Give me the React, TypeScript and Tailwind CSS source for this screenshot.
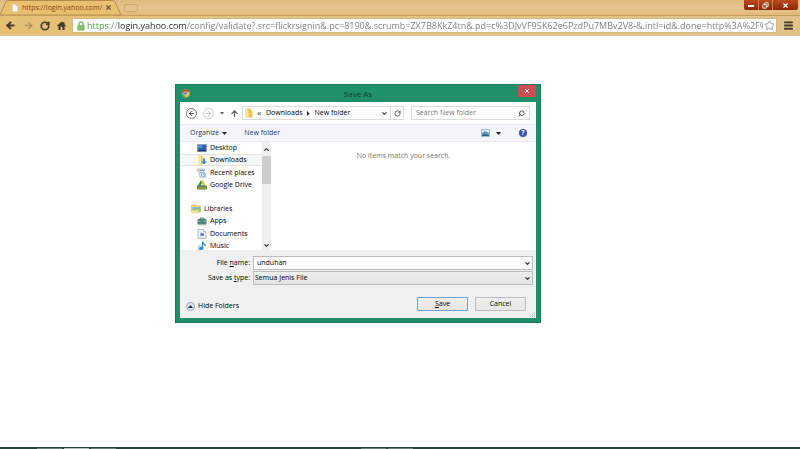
import React, { useState } from 'react';
import { ArrowLeft, ArrowRight, ArrowUp, ChevronDown, ChevronUp, Menu, RotateCw, Search, Star, X } from 'lucide-react';

const PAGE_URL =
  'https://login.yahoo.com/config/validate?.src=flickrsignin&.pc=8190&.scrumb=ZX7B8KkZ4tn&.pd=c%3DJvVF95K62e6PzdPu7MBv2V8-&.intl=id&.done=http%3A%2F%2Fwww.flickr.com';

function DesktopIcon() {
  return (
    <svg viewBox="0 0 10 10" className="h-[10px] w-[10px] shrink-0">
      <rect x="0.5" y="1.5" width="9" height="7" fill="#2f62b8" stroke="#8d99ad" strokeWidth="0.8" />
      <rect x="1" y="2" width="4" height="3" fill="#5b8fdd" />
      <rect x="1" y="7.2" width="8" height="1" fill="#1c2f5e" />
    </svg>
  );
}

function DownloadsIcon() {
  return (
    <svg viewBox="0 0 10 10" className="h-[10px] w-[10px] shrink-0">
      <path d="M1 0.5h4l1 1v8H1z" fill="#f1cf68" />
      <path d="M1 0.5l3 1.2v8L1 9z" fill="#fbe69b" />
      <path d="M6 3.5h2v3h1.8L7 9.6 4.2 6.5H6z" fill="#2f8fd6" />
    </svg>
  );
}

function RecentIcon() {
  return (
    <svg viewBox="0 0 10 10" className="h-[10px] w-[10px] shrink-0">
      <path d="M0.5 1h7v2H6.5l2.5 6.2H3L1.5 3H.5z" fill="#dfe8f0" stroke="#8fa3b5" strokeWidth="0.6" />
      <path d="M2.5 2.5h4M3 4.2h1.5" stroke="#5f86a8" strokeWidth="0.7" />
      <circle cx="6.3" cy="6.4" r="2" fill="#f5f9fc" stroke="#6f93b3" strokeWidth="0.7" />
      <path d="M6.3 5.2v1.3h1" stroke="#44627d" strokeWidth="0.5" fill="none" />
    </svg>
  );
}

function DriveIcon() {
  return (
    <svg viewBox="0 0 10 10" className="h-[10px] w-[10px] shrink-0">
      <path d="M0 5.5h10v3.2L9 9.5H1L0 8.7z" fill="#5f6f2c" />
      <path d="M3.5 0.5h2.6L9 6H6.4z" fill="#e5c63e" />
      <path d="M3.5 0.5L5 3.2 2.8 7 1 6z" fill="#3f8f43" />
      <path d="M4 5.2h4L7.2 6.5H3.2z" fill="#6c8f9f" />
      <path d="M1 8h8" stroke="#d8dd8a" strokeWidth="0.8" />
    </svg>
  );
}

function LibrariesIcon() {
  return (
    <svg viewBox="0 0 10 10" className="h-[10px] w-[10px] shrink-0">
      <path d="M0.5 1h3.6l.8 1H9.5v5.5H.5z" fill="#f3d677" stroke="#c9a74a" strokeWidth="0.5" />
      <path d="M1.6 3h7.6v3H1.6z" fill="#7fc0dc" />
      <path d="M2.2 4.6h7.4v3.9H2.2z" fill="#8fc56e" />
      <path d="M0.5 6.5c3 .3 5-.2 7-1v4H1z" fill="#f2df9c" />
    </svg>
  );
}

function AppsIcon() {
  return (
    <svg viewBox="0 0 10 10" className="h-[10px] w-[10px] shrink-0">
      <path d="M3.2 3.5V2h3.6v1.5" fill="none" stroke="#5c7568" strokeWidth="1" />
      <rect x="0.5" y="3" width="9" height="5.4" rx="1.2" fill="#4b8772" />
      <path d="M1 5.2h8" stroke="#b3d0be" strokeWidth="0.6" />
      <rect x="4" y="4.4" width="2" height="1.8" fill="#4a6ba0" />
      <path d="M1.5 8.9h7" stroke="#8da096" strokeWidth="0.6" />
    </svg>
  );
}

function DocumentsIcon() {
  return (
    <svg viewBox="0 0 10 10" className="h-[10px] w-[10px] shrink-0">
      <path d="M1 0.6h5.5L9 3v6.5H1z" fill="#fbfcfd" stroke="#8b98a8" strokeWidth="0.7" />
      <path d="M6.5 0.6V3H9" fill="#dfe5ee" stroke="#8b98a8" strokeWidth="0.5" />
      <path d="M2.3 3h3M2.3 8h4" stroke="#a4b0bd" strokeWidth="0.6" />
      <rect x="3.4" y="4.3" width="3.4" height="2.4" fill="#456ca6" />
    </svg>
  );
}

function MusicIcon() {
  return (
    <svg viewBox="0 0 10 10" className="h-[10px] w-[10px] shrink-0">
      <rect x="0.5" y="4" width="5" height="5" fill="#c8def0" />
      <path d="M5.6 0.5v7M5.6 0.8c.5 2 3 1.8 2.6 4.4" fill="none" stroke="#2e85c9" strokeWidth="1.2" />
      <ellipse cx="4.1" cy="7.4" rx="2.1" ry="1.6" fill="#2e85c9" />
    </svg>
  );
}

function ChromeIcon() {
  return (
    <svg viewBox="0 0 10 10" className="h-[9px] w-[9px]">
      <circle cx="5" cy="5" r="4.6" fill="#6aa84f" />
      <path d="M5 5L1 2.7A4.6 4.6 0 0 1 9 2.7z" fill="#d5483b" />
      <path d="M5 5L9 2.7A4.6 4.6 0 0 1 5 9.6z" fill="#efc63b" />
      <circle cx="5" cy="5" r="2.1" fill="#f4f4f4" />
      <circle cx="5" cy="5" r="1.6" fill="#4a7fc4" />
    </svg>
  );
}

const places = [
  { name: 'Desktop', icon: <DesktopIcon /> },
  { name: 'Downloads', icon: <DownloadsIcon /> },
  { name: 'Recent places', icon: <RecentIcon /> },
  { name: 'Google Drive', icon: <DriveIcon /> },
];

const libraries = [
  { name: 'Apps', icon: <AppsIcon /> },
  { name: 'Documents', icon: <DocumentsIcon /> },
  { name: 'Music', icon: <MusicIcon /> },
];

function BrowserChrome() {
  const [url, setUrl] = useState(PAGE_URL);

  return (
    <header className="border-b border-[#dcc59a]">
      <div className="flex h-[15px] items-start justify-between bg-linear-to-b from-[#dfb97e] via-[#e8c590] to-[#e0b97c]">
        <div className="relative flex h-[15px] w-[124px] items-center">
          <svg viewBox="0 0 124 15" preserveAspectRatio="none" className="absolute inset-0 h-full w-full">
            <path d="M0 15L6 1.5Q7 0.5 8 0.5H112Q114 0.5 115 2L121 15z" fill="#e8c070" stroke="#a87e43" strokeWidth="0.8" />
          </svg>
          <div className="relative flex w-full items-center pl-3">
            <svg viewBox="0 0 6 8" className="h-[8px] w-[6px] shrink-0">
              <path d="M0.3 0.3H4L5.7 2v5.7H.3z" fill="#fff" stroke="#c8b591" strokeWidth="0.4" />
              <path d="M4 0.3V2h1.7" fill="#ddd" stroke="#b9a98a" strokeWidth="0.4" />
            </svg>
            <span className="ml-1 w-[80px] whitespace-nowrap text-[7px] leading-[12px] text-[#8a4712]">https://login.yahoo.com/</span>
            <button aria-label="Close tab" className="ml-[3px] text-[#70502a]">
              <X className="h-[7px] w-[7px]" strokeWidth={4} />
            </button>
          </div>
        </div>
        <div className="mr-auto mt-1 h-[8px] w-[14px] rounded-xs border border-[#cfa568]" />
        <div className="mr-[2px] flex h-[10px] divide-x divide-[#cf8358] overflow-hidden rounded-b-xs bg-linear-to-b from-[#b94c1c] to-[#8c2605] text-white">
          <button aria-label="Minimize" className="flex w-[15px] items-center justify-center">
            <span className="mt-[2px] h-[2px] w-[6px] bg-white" />
          </button>
          <button aria-label="Restore" className="flex w-[14px] items-center justify-center">
            <svg viewBox="0 0 8 8" className="h-[7px] w-[7px]" fill="none" stroke="#fff">
              <path d="M3 3V1h4v4H5M1 3h4v4H1z" />
            </svg>
          </button>
          <button aria-label="Close window" className="flex w-[25px] items-center justify-center">
            <X className="h-[7px] w-[7px]" strokeWidth={4} />
          </button>
        </div>
      </div>

      <div className="flex h-[20px] items-center border-t border-[#c89d58] bg-linear-to-r from-[#e6c073] via-[#e2c489] to-[#e2c28b] text-[#453a2b]">
        <div className="flex w-[72px] items-center justify-between pl-[5px] pr-[6px]">
          <button aria-label="Back"><ArrowLeft className="h-[11px] w-[11px]" strokeWidth={4} /></button>
          <button aria-label="Forward" className="text-[#b39360]"><ArrowRight className="h-[11px] w-[11px]" strokeWidth={3} /></button>
          <button aria-label="Reload"><RotateCw className="h-[10px] w-[10px]" strokeWidth={4} /></button>
          <button aria-label="Home">
            <svg viewBox="0 0 10 10" className="h-[9px] w-[9px]" fill="currentColor">
              <path d="M5 0.5L0 5.2l.8.8.8-.7V10H4V6.5h2V10h2.4V5.3l.8.7.8-.8L8.3 3.5V1H7v1.3z" />
            </svg>
          </button>
        </div>
        <div className="flex h-[15px] min-w-0 flex-1 items-center border border-[#d5b982] bg-white pl-1">
          <svg viewBox="0 0 8 10" className="h-[10px] w-[8px] shrink-0">
            <path d="M2 5V3a2 2 0 0 1 4 0v2" fill="none" stroke="#79b661" strokeWidth="1.3" />
            <rect x="0.5" y="4.3" width="7" height="5.2" rx="0.6" fill="#6fb558" />
            <path d="M1.5 6h5M1.5 7.8h5" stroke="#b0d9a0" strokeWidth="0.6" />
          </svg>
          {/* scheme green, host dark, the rest grey */}
          <input
            aria-label="Address"
            value={url}
            onChange={(e) => setUrl(e.target.value)}
            className="ml-[2px] h-[13px] min-w-0 flex-1 bg-[linear-gradient(to_right,#3e9a2e_22px,#8a8a8a_22px,#8a8a8a_31px,#252525_31px,#252525_100px,#7c7c7c_100px)] bg-clip-text text-[9px] leading-[13px] text-transparent outline-none"
          />
          <button aria-label="Bookmark this page" className="pl-[1px] pr-[1px] text-[#8f8f8f]"><Star className="h-[11px] w-[11px]" strokeWidth={2} /></button>
        </div>
        <button aria-label="Menu" className="flex w-[23px] justify-center"><Menu className="h-[11px] w-[11px]" strokeWidth={4} /></button>
      </div>
    </header>
  );
}

function FolderNav() {
  return (
    <div className="flex h-[22px] items-center bg-white px-[6px] text-[#333]">
      <button aria-label="Back" className="flex h-[11px] w-[11px] items-center justify-center rounded-full border border-[#777]">
        <ArrowLeft className="h-[7px] w-[7px]" strokeWidth={3} />
      </button>
      <button aria-label="Forward" className="ml-[6px] flex h-[11px] w-[11px] items-center justify-center rounded-full border border-[#cfcfcf] text-[#bdbdbd]">
        <ArrowRight className="h-[7px] w-[7px]" strokeWidth={3} />
      </button>
      <button aria-label="Recent locations" className="ml-[6px]">
        <svg viewBox="0 0 4 3" className="h-[3px] w-[4px]"><path d="M0 0h4L2 2.5z" fill="#555" /></svg>
      </button>
      <button aria-label="Up one level" className="ml-[6px] text-[#555]"><ArrowUp className="h-[9px] w-[9px]" strokeWidth={3} /></button>
      <div className="ml-[3px] flex h-[14px] min-w-0 flex-1 items-center border border-[#dcdcdc] pl-[2px] text-black">
        <svg viewBox="0 0 8 10" className="h-[10px] w-[8px]">
          <path d="M0.5 0.5H5l1 1V3h1.5v6.5h-7z" fill="#ecc554" />
          <path d="M0.5 0.5L3.5 2v7.7l-3-.7z" fill="#fbe59a" />
        </svg>
        <span className="ml-1 w-[9px] text-[9px] leading-[10px] text-[#555]">«</span>
        <span>Downloads</span>
        <svg viewBox="0 0 3 5" className="ml-[4px] mr-[5px] h-[5px] w-[3px]"><path d="M0 0l2.5 2.5L0 5z" fill="#222" /></svg>
        <span className="whitespace-nowrap">New folder</span>
        <button aria-label="Previous locations" className="ml-auto flex w-[12px] justify-center text-[#444]"><ChevronDown className="h-[7px] w-[7px]" strokeWidth={4} /></button>
        <button aria-label="Refresh" className="flex h-[12px] w-[13px] items-center justify-center border-l border-[#dcdcdc] text-[#555]">
          <RotateCw className="h-[7px] w-[7px]" strokeWidth={3} />
        </button>
      </div>
      <div className="ml-[7px] flex h-[14px] w-[119px] items-center border border-[#dcdcdc] px-[4px]">
        <input aria-label="Search New folder" placeholder="Search New folder" className="min-w-0 flex-1 outline-none placeholder:text-[#777]" />
        <Search className="h-[7px] w-[7px] -scale-x-100 text-[#444]" strokeWidth={3} />
      </div>
    </div>
  );
}

function CommandBar() {
  return (
    <div className="flex h-[18px] items-center border-y border-[#e9ebf1] bg-[#f5f6fa] pl-[10px] pr-[9px] text-[#1e3a66]">
      <button className="flex items-center gap-[3px]">
        Organize
        <svg viewBox="0 0 5 3" className="h-[3px] w-[5px]"><path d="M0 0h5L2.5 3z" fill="#1e3250" /></svg>
      </button>
      <button className="ml-[17px]">New folder</button>
      <button aria-label="Change your view" className="ml-auto flex items-center gap-[6px]">
        <svg viewBox="0 0 9 8" className="h-[8px] w-[9px]">
          <rect x="0.5" y="0.5" width="8" height="7" fill="#e8f2fa" stroke="#86a5bd" strokeWidth="0.7" />
          <path d="M1 4l3-2 4 2v3H1z" fill="#5f99bf" />
          <path d="M1 6l3-1 4 1v1H1z" fill="#316184" />
        </svg>
        <svg viewBox="0 0 5 3" className="h-[3px] w-[5px]"><path d="M0 0h5L2.5 3z" fill="#222" /></svg>
      </button>
      <button aria-label="Help" className="ml-[18px] flex h-[8px] w-[8px] items-center justify-center rounded-full bg-[#3a51ae] text-[7px] font-bold leading-[8px] text-white">?</button>
    </div>
  );
}

function Sidebar() {
  const [selected, setSelected] = useState('Downloads');

  return (
    <nav className="flex h-[108px] w-[91px] shrink-0">
      <ul className="grid h-[110px] w-[82px] grid-rows-9">
        {places.map((p) => (
          <li key={p.name}>
            <button
              onClick={() => setSelected(p.name)}
              className={`flex h-full w-full items-center gap-[3px] pl-[17px] ${selected === p.name ? 'border-y border-[#e4e4e4] bg-[#f7f7f7]' : ''}`}
            >
              {p.icon}
              <span className="whitespace-nowrap">{p.name}</span>
            </button>
          </li>
        ))}
        <li aria-hidden="true" />
        <li className="flex items-center gap-[3px] pl-[11px]">
          <LibrariesIcon />
          <span>Libraries</span>
        </li>
        {libraries.map((l) => (
          <li key={l.name}>
            <button onClick={() => setSelected(l.name)} className="flex h-full w-full items-center gap-[3px] pl-[17px]">
              {l.icon}
              <span>{l.name}</span>
            </button>
          </li>
        ))}
      </ul>
      <div className="flex w-[9px] flex-col items-center bg-[#f0f0f0] text-[#333]">
        <button aria-label="Scroll up" className="flex h-[14px] items-center"><ChevronUp className="h-[7px] w-[7px]" strokeWidth={4} /></button>
        <div className="h-[28px] w-full bg-[#cdcdcd]" />
        <button aria-label="Scroll down" className="mt-auto flex h-[10px] items-center"><ChevronDown className="h-[7px] w-[7px]" strokeWidth={4} /></button>
      </div>
    </nav>
  );
}

function SaveForm() {
  const [fileName, setFileName] = useState('unduhan');

  return (
    <form onSubmit={(e) => e.preventDefault()} className="relative bg-[#f0f0f0] pb-[7px] pl-[6px] pr-[3px] pt-[6px]">
      <div className="grid grid-cols-[64px_1fr] items-center gap-x-[3px] gap-y-px">
        <label htmlFor="file-name" className="text-right">File <span className="underline">n</span>ame:</label>
        <div className="flex h-[14px] items-center border border-[#bcbcbc] bg-white pl-[3px] pr-px">
          <input id="file-name" value={fileName} onChange={(e) => setFileName(e.target.value)} className="min-w-0 flex-1 outline-none" />
          <ChevronDown className="h-[7px] w-[7px] text-[#333]" strokeWidth={4} />
        </div>
        <label htmlFor="file-type" className="whitespace-nowrap text-right">Save as <span className="underline">t</span>ype:</label>
        <div className="relative h-[14px] border border-[#bcbcbc] bg-linear-to-b from-[#efefef] to-[#e4e4e4]">
          <select id="file-type" className="block h-[12px] w-full appearance-none pl-px leading-[12px] outline-none">
            <option>Semua Jenis File</option>
          </select>
          <ChevronDown className="pointer-events-none absolute right-px top-[3px] h-[7px] w-[7px] text-[#333]" strokeWidth={4} />
        </div>
      </div>
      <div className="mt-[12px] flex items-end pr-[7px]">
        <button type="button" className="flex items-center gap-[3px]">
          <span className="flex h-[9px] w-[9px] items-center justify-center rounded-full border border-[#9ba7b8] bg-[#dfe5ee]">
            <svg viewBox="0 0 5 3" className="h-[3px] w-[5px]"><path d="M0 3h5L2.5 0z" fill="#1d2f4d" /></svg>
          </span>
          Hide Folders
        </button>
        <button type="submit" className="ml-auto h-[14px] w-[51px] border border-[#6ea3cf] bg-linear-to-b from-[#f0f0f0] to-[#e6e6e6]"><span className="underline">S</span>ave</button>
        <button type="button" className="ml-[7px] h-[14px] w-[51px] border border-[#bcbcbc] bg-linear-to-b from-[#f0f0f0] to-[#e6e6e6]">Cancel</button>
      </div>
      <svg viewBox="0 0 6 6" className="absolute bottom-0 right-0 h-[6px] w-[6px]" fill="#bbb">
        <path d="M4 0h1v1H4zM4 2h1v1H4zM4 4h1v1H4zM2 2h1v1H2zM2 4h1v1H2zM0 4h1v1H0z" />
      </svg>
    </form>
  );
}

function SaveDialog() {
  return (
    <section role="dialog" aria-labelledby="dialog-title" className="w-[366px] max-w-full border border-[#187a58] bg-[#1f9069] px-[4px] pb-[4px] text-[7px] leading-[10px] text-black">
      <div className="grid h-[17px] grid-cols-[1fr_auto_1fr] items-center">
        <div className="pl-px"><ChromeIcon /></div>
        <h1 id="dialog-title" className="text-[8px] leading-[12px] text-[#123c2e]">Save As</h1>
        <button aria-label="Close" className="mb-[5px] flex h-[12px] w-[18px] items-center justify-center justify-self-end bg-[#c94f52] text-white">
          <X className="h-[6px] w-[6px]" strokeWidth={4} />
        </button>
      </div>
      <FolderNav />
      <CommandBar />
      <div className="flex bg-white">
        <Sidebar />
        <p className="flex-1 pt-[9px] text-center text-[#777]">No items match your search.</p>
      </div>
      <SaveForm />
    </section>
  );
}

export default function App() {
  return (
    <div className="flex min-h-screen flex-col bg-white font-['Open_Sans','Noto_Sans',sans-serif]">
      <BrowserChrome />
      <main className="flex-1 pl-[175px] pt-[48px]">
        <SaveDialog />
      </main>
      <footer className="flex h-[2px] gap-[2px] bg-[#24443f] pl-[37px]">
        <div className="h-px w-[25px] self-end bg-[#6d7f7c]" />
        <div className="h-px w-[25px] self-end bg-[#b3bebc]" />
        <div className="h-px w-[25px] self-end bg-[#6d7f7c]" />
        <div className="ml-[243px] h-px w-[25px] self-end bg-[#6d7f7c]" />
        <div className="h-px w-[25px] self-end bg-[#6d7f7c]" />
      </footer>
    </div>
  );
}
